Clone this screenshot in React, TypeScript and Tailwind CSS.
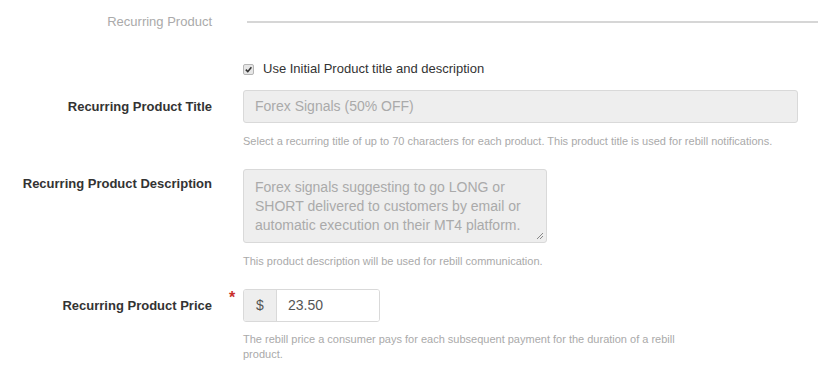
import React from "react";

const Label = (props: { children: React.ReactNode, className?: string }) => (
  <div className={"w-[212px] shrink-0 text-right text-[13px] font-bold text-[#333] " + (props.className ?? "")}>
    {props.children}
  </div>
);

const Help = (props: { children: React.ReactNode, className?: string }) => (
  <div className={"ml-[243px] text-[11px] leading-[14px] text-[#aaa] " + (props.className ?? "")}>
    {props.children}
  </div>
);

export default function App() {
  return (
    <div className="w-[818px] h-[373px] overflow-hidden bg-white font-[family-name:'Liberation_Sans',Arial,sans-serif]">
      {/* section header */}
      <div className="flex items-center h-[44px]">
        <div className="w-[212px] shrink-0 text-right text-[13px] text-[#aaa]">Recurring Product</div>
        <div className="ml-[35px] flex-1 border-t-2 border-[#d6d6d6]"></div>
      </div>

      {/* use initial */}
      <div className="mt-[16px] ml-[243px] flex items-center h-[18px] gap-[9px]">
        <span className="w-[11px] h-[11px] rounded-[2px] border border-[#b5b5b5] bg-[#e6e6e6] flex items-center justify-center">
          <svg width="9" height="9" viewBox="0 0 10 10">
            <path d="M2 5.2 L4.2 7.4 L8.2 2.6" fill="none" stroke="#333" strokeWidth="1.8" />
          </svg>
        </span>
        <span className="text-[13px] text-[#333]">Use Initial Product title and description</span>
      </div>

      {/* title */}
      <div className="mt-[12px] flex items-center">
        <Label>Recurring Product Title</Label>
        <div className="ml-[31px] w-[555px] h-[33px] rounded-[3px] border border-[#d9d9d9] bg-[#eee] flex items-center px-[11px] text-[14px] text-[#aaa]">
          Forex Signals (50% OFF)
        </div>
      </div>
      <Help className="mt-[11px]">
        Select a recurring title of up to 70 characters for each product. This product title is used for rebill notifications.
      </Help>

      {/* description */}
      <div className="mt-[21px] flex items-start">
        <Label className="pt-[7px] leading-[16px]">Recurring Product Description</Label>
        <div className="relative ml-[31px] w-[304px] h-[74px] rounded-[3px] border border-[#d9d9d9] bg-[#eee] px-[11px] pt-[8px] text-[14px] leading-[19px] text-[#aaa]">
          Forex signals suggesting to go LONG or SHORT delivered to customers by email or automatic execution on their MT4 platform.
          <svg className="absolute right-[2px] bottom-[2px]" width="8" height="8" viewBox="0 0 8 8">
            <path d="M7 1 L1 7 M7 4 L4 7" stroke="#888" strokeWidth="1" />
          </svg>
        </div>
      </div>
      <Help className="mt-[11px]">This product description will be used for rebill communication.</Help>

      {/* price */}
      <div className="mt-[21px] flex items-center">
        <Label>Recurring Product Price</Label>
        <div className="w-[31px] h-[33px] pl-[17px] text-[16px] font-bold leading-[18px] text-[#c9302c]">*</div>
        <div className="w-[137px] h-[33px] rounded-[3px] border border-[#d9d9d9] flex overflow-hidden">
          <div className="w-[33px] bg-[#eee] border-r border-[#d9d9d9] flex items-center justify-center text-[14px] text-[#555]">$</div>
          <div className="flex-1 bg-white flex items-center pl-[11px] text-[14px] text-[#555]">23.50</div>
        </div>
      </div>
      <Help className="mt-[10px] w-[440px] leading-[15px]">
        The rebill price a consumer pays for each subsequent payment for the duration of a rebill product.
      </Help>
    </div>
  );
}
